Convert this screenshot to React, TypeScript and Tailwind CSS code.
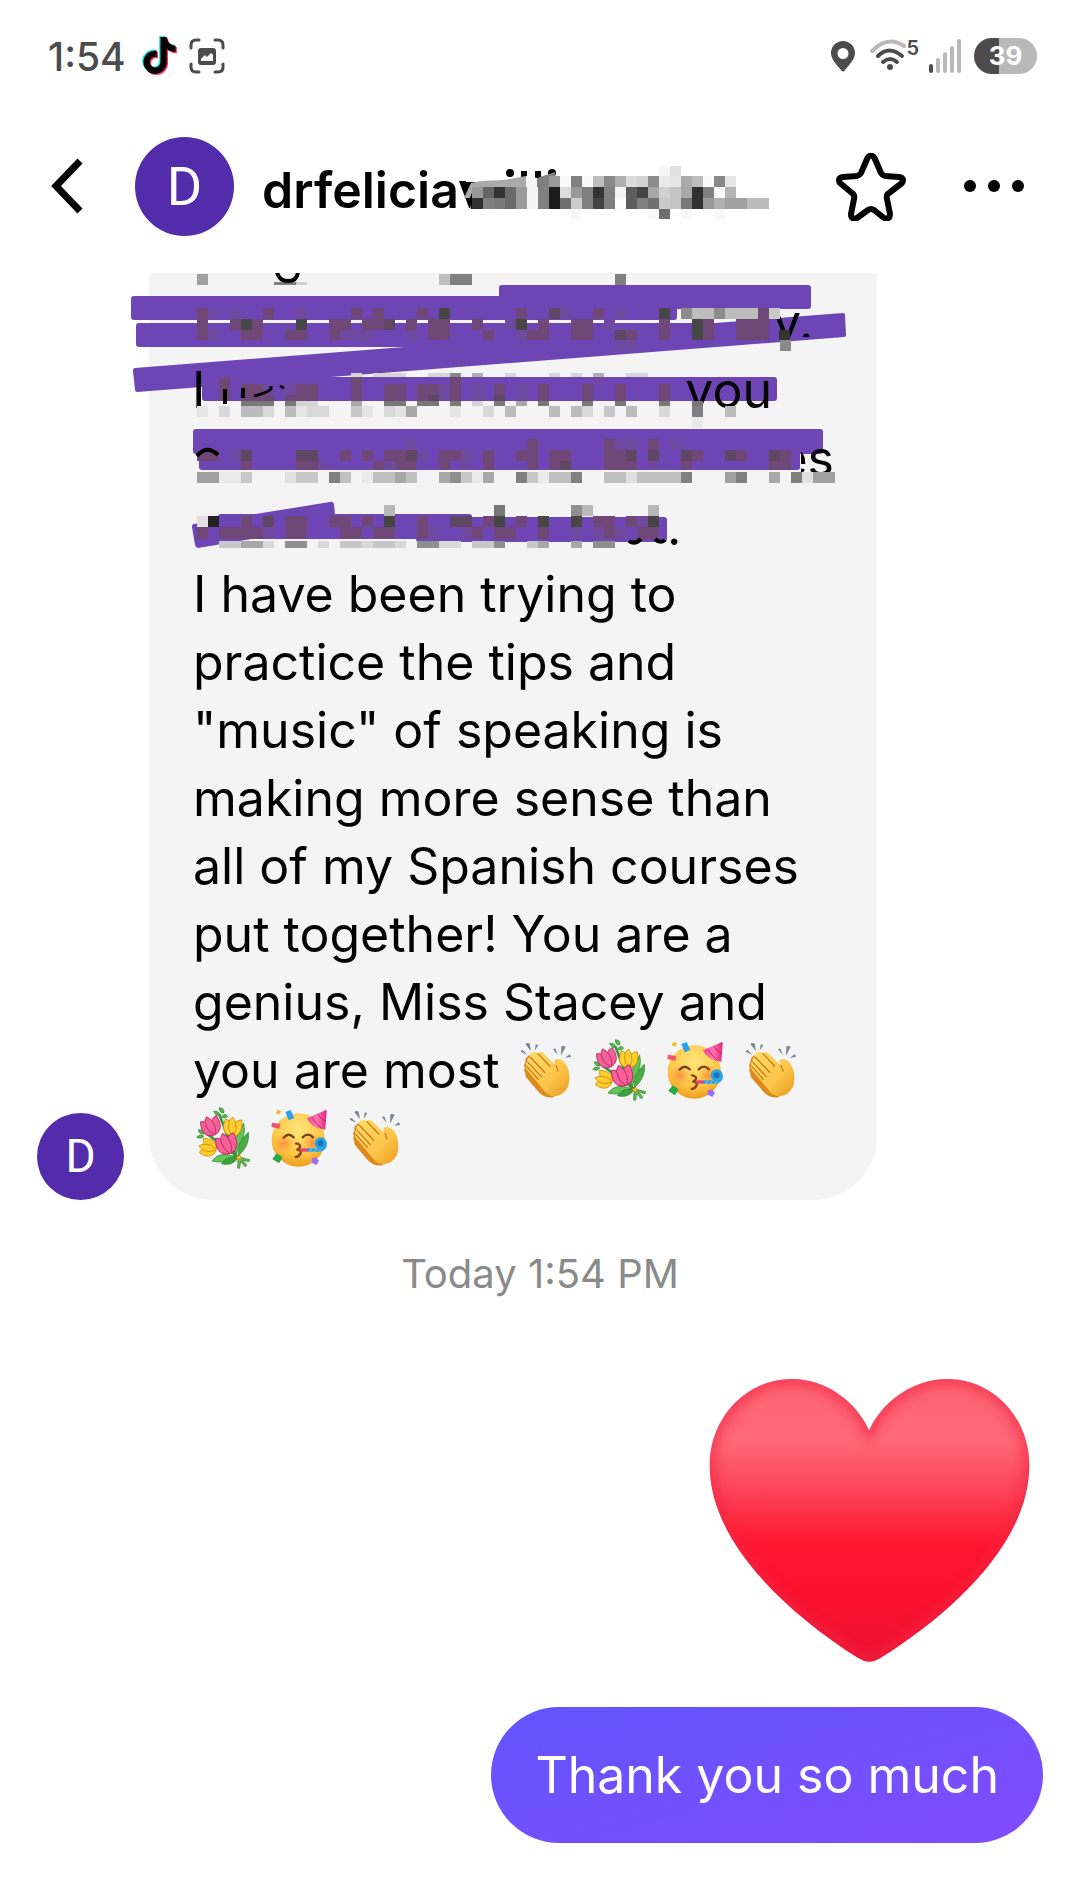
import type { ReactNode } from 'react';

type Row = { y: number; h: number; cells: Record<string, number[]> };

const CELL = 11;
const MAUVE = '#704878';
const DIM = '#6f48a0';
const DUSK = '#5f4763';
const DARK = '#474747';

const nameRows: Row[] = [
  { y: 10, h: 10, cells: { '#f6f6f6': [17], '#e0e0e0': [18] } },
  {
    y: 20,
    h: 11,
    cells: {
      '#999999': [7], '#fafafa': [8, 10, 21], '#808080': [9], '#bdbdbd': [11, 20], '#888888': [12, 22],
      '#b0b0b0': [13], '#dcdcdc': [14], '#d4d4d4': [15], '#8c8c8c': [16], '#eaeaea': [17], '#e5e5e5': [18, 23],
      '#aaaaaa': [19],
    },
  },
  {
    y: 31,
    h: 11,
    cells: {
      '#999999': [0, 9], '#666666': [1], '#333333': [2], '#6a6a6a': [3], '#9a9a9a': [4], '#f4f4f4': [5, 13],
      '#808080': [6, 10, 12, 21], '#1c1c1c': [7], '#dcdcdc': [8], '#343434': [11], '#5c5c5c': [14], '#444444': [15],
      '#a8a8a8': [16, 19], '#d0d0d0': [17], '#c4c4c4': [18], '#303030': [20], '#fafafa': [22], '#b4b4b4': [23],
    },
  },
  {
    y: 42,
    h: 11,
    cells: {
      '#303030': [0, 20], '#808080': [1, 6, 10, 12, 15], '#7a7a7a': [2], '#6a6a6a': [3], '#9a9a9a': [4],
      '#f4f4f4': [5], '#1c1c1c': [7], '#707070': [8, 16], '#cccccc': [9], '#444444': [11], '#fcfcfc': [13],
      '#5c5c5c': [14], '#c8c8c8': [17], '#c4c4c4': [18], '#777777': [19], '#999999': [21], '#b0b0b0': [22],
      '#a0a0a0': [23, 24], '#bcbcbc': [25, 26],
    },
  },
  { y: 53, h: 10, cells: { '#6e6e6e': [17], '#f8f8f8': [9, 16, 19, 22] } },
];

const messageRows: Row[] = [
  { y: 274, h: 11, cells: { '#a0a0a0': [0], '#c0c0c0': [22], '#808080': [23, 24, 38] } },
  { y: 282, h: 3, cells: { '#808080': [7, 8], '#d0d0d0': [9] } },
  {
    y: 308,
    h: 11,
    cells: {
      [MAUVE]: [0, 6, 14, 16, 20, 29, 36, 51], [DIM]: [1, 3, 9, 33, 38], [DARK]: [22, 42], [DUSK]: [32],
      '#8c8c8c': [44, 47], '#bcbcbc': [45, 46, 48, 49, 50], '#c8c8c8': [52],
    },
  },
  {
    y: 319,
    h: 11,
    cells: {
      [MAUVE]: [0, 3, 5, 12, 13, 15, 16, 19, 21, 22, 25, 31, 34, 35, 42, 46, 49, 50, 51],
      [DARK]: [4, 9, 29, 45], [DUSK]: [17], [DIM]: [28, 37],
    },
  },
  {
    y: 330,
    h: 10,
    cells: {
      [MAUVE]: [0, 4, 5, 8, 9, 12, 21, 22, 26, 30, 31, 34, 35, 39, 42, 46, 49, 50, 51],
      [DIM]: [1, 13, 14, 15, 19, 29], [DUSK]: [38], [DARK]: [45],
    },
  },
  { y: 340, h: 11, cells: { [DIM]: [38, 39], '#8a8a8a': [53] } },
  {
    y: 373,
    h: 4,
    cells: { '#d6d6d6': [14, 16, 17, 18, 21, 22, 28, 32, 34, 39, 40], '#888888': [23], '#b0b0b0': [25, 36] },
  },
  { y: 377, h: 7, cells: { [MAUVE]: [2, 14, 23], [DIM]: [36] } },
  {
    y: 384,
    h: 17,
    cells: {
      [MAUVE]: [2, 4, 5, 9, 10, 14, 17, 18, 20, 21, 23, 27, 31, 35, 38, 42], [DIM]: [6, 8, 22, 25, 29],
    },
  },
  { y: 395, h: 6, cells: { [MAUVE]: [6, 8], [DUSK]: [21, 27] } },
  {
    y: 401,
    h: 5,
    cells: {
      '#787878': [4, 5, 6, 8, 17, 18, 20, 21, 23, 27, 31, 35, 38, 42, 45], '#a8a8a8': [14, 29], '#d4d4d4': [9, 10, 25],
    },
  },
  {
    y: 406,
    h: 11,
    cells: {
      '#d8d8d8': [2, 6, 10, 11, 17, 26, 35, 42], '#bcbcbc': [4, 5, 8, 28, 32, 34, 39, 48], '#c8c8c8': [14, 37],
      '#a8a8a8': [19], '#e4e4e4': [0, 9, 15, 18, 23], '#808080': [45],
    },
  },
  { y: 417, h: 11, cells: { '#e8e8e8': [45] } },
  { y: 439, h: 11, cells: { [DIM]: [19, 38, 39, 43], [MAUVE]: [30, 37, 41] } },
  {
    y: 450,
    h: 11,
    cells: {
      [MAUVE]: [0, 1, 13, 15, 17, 18, 22, 23, 26, 29, 30, 32, 33, 37, 38, 45, 49, 53],
      [DUSK]: [4, 9, 10, 19, 39, 41, 44, 48, 52], [DIM]: [3, 20, 24],
    },
  },
  {
    y: 461,
    h: 9,
    cells: {
      [MAUVE]: [4, 9, 10, 16, 18, 19, 22, 26, 30, 32, 37, 38, 39, 44, 52, 53], [DIM]: [11, 17, 24, 41], [DUSK]: [33],
    },
  },
  {
    y: 472,
    h: 11,
    cells: {
      '#a0a0a0': [0, 1, 48, 56, 57], '#eaeaea': [2, 3, 15, 25, 31], '#c8c8c8': [4, 9, 10, 24, 30], '#e0e0e0': [8, 39, 55],
      '#808080': [12, 29, 34, 44, 49, 54], '#c0c0c0': [13, 16, 17, 19, 32, 33, 37, 38, 40, 41, 42, 43], '#a8a8a8': [18, 22, 26, 52],
      '#909090': [23],
    },
  },
  { y: 505, h: 11, cells: { '#b8b8b8': [17, 35, 41], '#787878': [27], '#909090': [34] } },
  {
    y: 516,
    h: 11,
    cells: {
      '#e0e0e0': [0], '#222222': [1], [MAUVE]: [4, 8, 9, 12, 13, 15, 20, 26, 29, 36, 37, 39], [DUSK]: [6, 23, 24],
      [DARK]: [17, 27, 31, 34, 41], [DIM]: [40],
    },
  },
  {
    y: 527,
    h: 12,
    cells: {
      [MAUVE]: [0, 2, 3, 4, 5, 8, 9, 13, 14, 16, 17, 20, 25, 27, 28, 31, 37, 40, 41], [DIM]: [6, 21, 24, 34, 36, 38],
    },
  },
  {
    y: 541,
    h: 7,
    cells: {
      '#c8c8c8': [2, 3, 13, 14, 16, 17, 25, 26, 30], '#a8a8a8': [4, 5, 31, 34], '#909090': [8, 9, 20, 21, 27, 36, 37],
      '#d8d8d8': [6, 11, 15, 18, 22, 23],
    },
  },
];

function Mosaic({ rows, x }: { rows: Row[]; x: number }) {
  return (
    <g shapeRendering="crispEdges">
      {rows.flatMap((row) =>
        Object.entries(row.cells).flatMap(([fill, columns]) =>
          columns.map((c) => (
            <rect key={`${row.y}-${fill}-${c}`} x={x + c * CELL} y={row.y} width={CELL} height={row.h} fill={fill} />
          )),
        ),
      )}
    </g>
  );
}

function Scribbles() {
  return (
    <svg className="absolute top-0 left-[-19px] h-[288px] w-[750px]" viewBox="130 273 750 288" aria-label="Crossed-out lines" role="img">
      <defs>
        <clipPath id="clip-es"><rect x="801" y="430" width="50" height="42" /></clipPath>
        <clipPath id="clip-you"><rect x="680" y="370" width="110" height="40" /></clipPath>
        <clipPath id="clip-y"><rect x="774" y="312" width="50" height="25" /></clipPath>
      </defs>
      <g fill="#6d45b5">
        <rect x="131" y="296" width="546" height="24" rx="3" />
        <rect x="499" y="285" width="312" height="24" rx="3" />
        <rect x="136" y="323" width="560" height="24" rx="3" />
        <path d="M135 368 843 313q2 0 2 2l1 20q0 2-2 2L137 392q-2 0-2-2l-2-19q0-3 2-3Z" />
        <rect x="202" y="377" width="575" height="24" rx="3" />
        <rect x="193" y="429" width="630" height="25" rx="3" />
        <rect x="199" y="440" width="601" height="30" rx="3" />
        <path d="M194 524 330 502q3-1 4 2l2 21-138 23q-2 0-3-3l-3-18q0-3 2-3Z" />
        <rect x="218" y="514" width="254" height="25" rx="3" />
        <rect x="416" y="517" width="251" height="25" rx="3" />
      </g>
      <g fontSize="50" fill="#000">
        <text x="192" y="408">I</text>
        <text x="772" y="408" textAnchor="end" clipPath="url(#clip-you)">you</text>
        <text x="834" y="476" textAnchor="end" clipPath="url(#clip-es)">es</text>
        <text x="773" y="340" clipPath="url(#clip-y)">y.</text>
        <text x="667" y="545">.</text>
      </g>
      <Mosaic rows={messageRows} x={197} />
      <rect x="779" y="330" width="11" height="10" fill="#333" />
      <g fill="none" stroke="#000" strokeWidth="4">
        <path d="M277 272Q279 281 288 281Q297 281 298 272" />
        <path d="M197 456Q207 444 218 455" />
        <path d="M225 389V404M243 388V398" />
        <path d="M254 396Q267 393 271 389V386M280 386l4 2" strokeWidth="3" />
        <path d="M629 541Q635 545 641 539M655 539Q660 544 665 540" />
      </g>
    </svg>
  );
}

function Emoji({ label, viewBox, children }: { label: string; viewBox: string; children: ReactNode }) {
  return (
    <svg role="img" aria-label={label} viewBox={viewBox} className="inline-block h-[62px] w-[61px] align-[-13px]">
      {children}
    </svg>
  );
}

function Clap() {
  return (
    <Emoji label="Clapping hands" viewBox="42 28 183 186">
      <defs>
        <linearGradient id="skin" x1="0" y1="0" x2="1" y2="1">
          <stop offset="0" stopColor="#ffdc6b" />
          <stop offset="0.6" stopColor="#fcc549" />
          <stop offset="1" stopColor="#e79a1e" />
        </linearGradient>
      </defs>
      <g fill="#7d8791">
        <path d="M62 66Q64 60 68 61L82 75Z" />
        <path d="M76 43Q82 38 89 42L93 65Z" />
        <path d="M107 45Q112 44 115 47L104 63Z" />
        <path d="M159 59Q163 55 167 58L173 76Z" />
        <path d="M184 50Q191 47 197 51L183 78Z" />
        <path d="M209 74Q213 78 213 82L195 84Z" />
      </g>
      <path d="M76 99Q69 106 75 115Q70 121 76 131Q74 139 82 147L118 189Q138 207 160 203L174 188 100 80Q90 72 84 80Q74 86 76 99Z" fill="#dc8a1c" />
      <path d="M94 70Q86 74 90 83Q80 84 83 96Q75 99 80 108Q75 114 83 123L126 175Q142 199 162 200Q190 198 204 171Q211 149 206 124Q200 100 184 91Q172 84 163 92Q161 98 168 108L129 70Q119 62 114 71Q103 62 94 70Z" fill="url(#skin)" />
      <path d="M91 83 134 128M84 98 124 141M81 111 115 149M114 72 149 109M168 107 174 124" fill="none" stroke="#cd7a19" strokeWidth="4" strokeLinecap="round" />
    </Emoji>
  );
}

function Tulip({ x, y, fill, edge, r, s }: { x: number; y: number; fill: string; edge: string; r: number; s: number }) {
  return (
    <g transform={`translate(${x} ${y}) rotate(${r}) scale(${s})`} stroke={edge} strokeWidth="2.5" strokeLinejoin="round">
      <path d="M-25 -22Q-33 6 -20 20Q-7 31 7 28Q26 22 29 3Q31 -12 26 -26Q14 -24 8 -16Q3 -26 -3 -31Q-10 -24 -12 -17Q-18 -23 -25 -22Z" fill={fill} />
      <path d="M-12 -17Q-15 9 2 26M8 -16Q17 5 7 26" fill="none" />
    </g>
  );
}

function Bouquet() {
  return (
    <Emoji label="Bouquet" viewBox="273 28 183 186">
      <g stroke="#258132" strokeWidth="2">
        <g fill="#55b948">
          <path d="M352 30Q369 31 365 46Q352 47 352 30Z" />
          <path d="M335 41Q349 39 354 51Q343 59 335 41Z" />
          <path d="M359 57Q370 44 377 56Q370 66 359 57Z" />
          <path d="M289 96Q302 95 306 109Q291 111 289 96Z" />
          <path d="M284 119Q293 108 305 115Q299 126 284 119Z" />
        </g>
        <path d="M352 50 400 178M310 105 408 178M370 75 400 170" fill="none" stroke="#39983c" strokeWidth="8" />
        <path d="M425 76Q434 112 409 145L403 174Q388 137 407 110Z" fill="#62c352" />
        <path d="M439 104Q445 142 410 174Q402 137 439 104Z" fill="#49ad42" />
        <path d="M330 190Q354 157 402 178Q363 200 330 190Z" fill="#65c355" />
        <path d="M358 198Q376 171 408 182Q389 207 358 198Z" fill="#3da23e" />
        <path d="M405 173 415 179 443 186 441 192 422 188 435 203 429 207 416 191 413 212 407 211 408 184Z" fill="#64b94d" />
      </g>
      <Tulip x={326} y={86} fill="#f4609a" edge="#be2863" r={-18} s={1} />
      <Tulip x={391} y={88} fill="#ffcf32" edge="#c98700" r={7} s={0.95} />
      <Tulip x={318} y={151} fill="#ffcc2e" edge="#c98700" r={-70} s={0.88} />
      <Tulip x={373} y={139} fill="#f9609a" edge="#bd2460" r={-14} s={1.08} />
      <path d="m402 178 12-5 5 9-10 5Z" fill="#f5be31" stroke="#b87b0b" strokeWidth="2" />
    </Emoji>
  );
}

function Party() {
  return (
    <Emoji label="Partying face" viewBox="495 28 183 186">
      <defs>
        <radialGradient id="face" cx="0.5" cy="0.3" r="0.72">
          <stop offset="0" stopColor="#ffe47a" />
          <stop offset="0.65" stopColor="#fdc746" />
          <stop offset="1" stopColor="#ef981d" />
        </radialGradient>
        <radialGradient id="cheek">
          <stop offset="0" stopColor="#ff7d35" stopOpacity="0.75" />
          <stop offset="1" stopColor="#ff8a3d" stopOpacity="0" />
        </radialGradient>
        <linearGradient id="hat">
          <stop offset="0" stopColor="#f3408e" />
          <stop offset="0.5" stopColor="#ff75b0" />
          <stop offset="1" stopColor="#dc277a" />
        </linearGradient>
      </defs>
      <circle cx="586" cy="127" r="80" fill="url(#face)" />
      <circle cx="542" cy="137" r="31" fill="url(#cheek)" />
      <circle cx="628" cy="137" r="31" fill="url(#cheek)" />
      <path d="M542 120Q556 103 572 119M599 119Q615 103 630 119" fill="none" stroke="#75431b" strokeWidth="7" strokeLinecap="round" />
      <path d="M579 137Q596 140 590 150L583 156Q597 159 593 166Q589 177 578 178" fill="none" stroke="#884619" strokeWidth="7" strokeLinecap="round" strokeLinejoin="round" />
      <path d="M592 157H615" stroke="#ee3c78" strokeWidth="10" />
      <path d="M613 157H650Q667 154 666 137" fill="none" stroke="#2c9fe3" strokeWidth="11" />
      <path d="M620 162l7-10M634 162l7-10M648 161l8-10" stroke="#83d2fb" strokeWidth="3" />
      <circle cx="653" cy="137" r="18" fill="#28a3e7" />
      <circle cx="653" cy="137" r="9" fill="#1575b5" />
      <path d="M669 37Q672 37 671 41L667 96Q646 94 631 84Q618 76 612 62Z" fill="url(#hat)" />
      <path d="M626 58Q637 76 656 93M644 49Q653 64 669 72" fill="none" stroke="#cf1d70" strokeWidth="3" />
      <path d="m523 36 11 4-5 11-11-4Z" fill="#f8bd2d" />
      <path d="m547 43 16-6 11 24-17 7Z" fill="#2ba1eb" />
      <path d="m507 75 25 4-3 14-24-5Z" fill="#f6526b" />
      <path d="m521 167 18 12-11 18-20-13Z" fill="#28a944" />
      <path d="m638 179 10 10-8 13-14-7 1-13Z" fill="#9b6cf2" />
    </Emoji>
  );
}

const NOTE =
  'M448 209.9a210 210 0 0 1-122.8-39.2v178.7A162.6 162.6 0 1 1 185 188.3v89.9a74.6 74.6 0 1 0 52.2 71.2V0h88a121 121 0 0 0 1.9 22.2A122 122 0 0 0 381 102.4a121 121 0 0 0 67 20.1Z';

function StatusBar() {
  return (
    <div className="flex h-28 items-center justify-between pr-[43px] pl-12 text-[#4c4c4c]">
      <div className="flex items-center gap-4">
        <span className="text-[39px] leading-none font-medium">1:54</span>
        <svg className="h-10 w-[35px]" viewBox="-20 -14 488 558" aria-hidden="true">
          <path d={NOTE} fill="#25e5e5" transform="translate(-18 -14)" />
          <path d={NOTE} fill="#f5335c" transform="translate(18 18)" />
          <path d={NOTE} fill="#000" />
        </svg>
        <svg className="h-9 w-9 -ml-1" viewBox="0 0 36 36" fill="none" stroke="currentColor" strokeWidth="3" strokeLinecap="round" aria-hidden="true">
          <path d="M2 10V7q0-5 5-5h3M26 2h3q5 0 5 5v3M34 26v3q0 5-5 5h-3M10 34H7q-5 0-5-5v-3" />
          <rect x="9" y="10" width="18" height="17" rx="3" fill="currentColor" stroke="none" />
          <path d="M12 23v-2l4-4 2 2 4-4 2 2v6Z" fill="#fff" stroke="none" />
        </svg>
      </div>
      <div className="flex items-center">
        <svg className="mr-[15px] h-[31px] w-6" viewBox="0 0 24 31" fill="currentColor" aria-hidden="true">
          <path fillRule="evenodd" d="M12 0a12 12 0 0 1 12 12c0 6-5 11-10 17q-2 3-4 0C5 23 0 18 0 12A12 12 0 0 1 12 0Zm0 7a5.5 5.5 0 1 0 0 11 5.5 5.5 0 0 0 0-11Z" />
        </svg>
        <svg className="h-9 w-9" viewBox="0 0 36 36" fill="none" strokeWidth="4" strokeLinecap="round" aria-hidden="true">
          <path d="M2 13Q18-3 34 8" stroke="#b9b9b9" />
          <path d="M8 18Q19 7 32 18M13 24Q20 18 27 24" stroke="currentColor" />
          <circle cx="20" cy="29" r="3" fill="currentColor" />
        </svg>
        <span className="mr-2.5 self-start text-xl leading-none font-semibold">5</span>
        <svg className="mr-[13px] h-[34px] w-8" viewBox="0 0 32 34" strokeWidth="4" strokeLinecap="round" aria-hidden="true">
          <path d="M2 27v5" stroke="#4c4c4c" />
          <path d="M9 21v11M16 15v17M23 9v23M30 2v30" stroke="#b9b9b9" />
        </svg>
        <span className="flex h-9 w-[63px] items-center justify-center rounded-full bg-linear-to-r from-[#4c4c4c] from-40% to-[#b9b9b9] to-40% text-[26px] leading-none font-bold text-white">
          39
        </span>
      </div>
    </div>
  );
}

function Header() {
  return (
    <header className="flex h-[161px] items-start pr-14 pl-[50px]">
      <button type="button" aria-label="Back" className="mt-[45px] mr-[51px] h-[58px] w-[34px]">
        <svg viewBox="0 0 34 58" fill="none" stroke="#000" strokeWidth="7">
          <path d="M30 4 6 29l24 25" />
        </svg>
      </button>
      <div className="mt-[25px] flex h-[99px] w-[99px] shrink-0 items-center justify-center rounded-full bg-[#522cab] font-[Roboto] text-[54px] text-white">
        D
      </div>
      <h1 className="relative mt-11 ml-7 flex-1 text-[50px] leading-[68px] font-semibold">
        drfeliciav
        <svg className="absolute top-0 left-[199px] h-[68px] w-[320px]" viewBox="0 0 320 68" aria-label="Hidden part of the name" role="img">
          <rect x="9" y="20" width="20" height="35" fill="#fff" />
          <g fill="#000">
            <circle cx="49" cy="17" r="4" />
            <path d="M60 15h6v8h-6ZM74 15h6v8h-6Z" />
            <circle cx="91" cy="17" r="4" />
            <path d="M4 26h20l-12 27H10Z" />
          </g>
          <path d="M3 42 10 27 20 25 42 24 65 20V31H13L9 42Z" fill="#aaa" />
          <path d="M65 20 76 22V42H65Z" fill="#f4f4f4" />
          <path d="M76 22 94 16V42H76Z" fill="#808080" />
          <Mosaic rows={nameRows} x={11} />
        </svg>
      </h1>
      <button type="button" aria-label="Favourite" className="mt-10 h-[70px] w-[70px]">
        <svg viewBox="0 0 70 68" fill="none" stroke="#000" strokeWidth="6" strokeLinejoin="round">
          <path d="M31.500 5q3.500-5 7 0L45 20q1 2 4 3l14 1q6 1 3 6L53 40q-3 2-2 6l3 15q0 6-6 4L38 57q-3-2-6 0L21 65q-6 2-6-4l3-15q1-4-2-6L4 30q-3-5 3-6l14-1q3-1 4-3Z" />
        </svg>
      </button>
      <button type="button" aria-label="More" className="mt-[68px] ml-[58px] h-3 w-[60px]">
        <svg viewBox="0 0 60 12" fill="#000">
          <circle cx="6" cy="6" r="6" />
          <circle cx="30" cy="6" r="6" />
          <circle cx="54" cy="6" r="6" />
        </svg>
      </button>
    </header>
  );
}

const HEART =
  'M568 215C530 130 440 60 335 60C200 60 88 175 88 320C88 540 300 750 535 900Q568 922 602 900C840 750 1050 540 1050 320C1050 175 940 60 803 60C700 60 605 130 568 215Z';

function Heart() {
  return (
    <svg role="img" aria-label="Red heart" className="mr-[13px] h-[285px] w-[321px]" viewBox="86 58 966 856">
      <defs>
        <linearGradient id="heart" x1="0" y1="0" x2="0" y2="1">
          <stop offset="0" stopColor="#fe6473" />
          <stop offset="0.22" stopColor="#ff6877" />
          <stop offset="0.4" stopColor="#fd4257" />
          <stop offset="0.58" stopColor="#ff1730" />
          <stop offset="0.75" stopColor="#fb122d" />
          <stop offset="1" stopColor="#ec1132" />
        </linearGradient>
        <clipPath id="heart-clip"><path d={HEART} /></clipPath>
        <filter id="soft" x="-10%" y="-10%" width="120%" height="120%"><feGaussianBlur stdDeviation="18" /></filter>
      </defs>
      <path d={HEART} fill="url(#heart)" />
      <g clipPath="url(#heart-clip)">
        <path d={HEART} fill="none" stroke="#f02844" strokeWidth="34" opacity="0.7" filter="url(#soft)" />
      </g>
    </svg>
  );
}

export default function App() {
  return (
    <div className="min-h-screen bg-white font-[Inter,sans-serif] text-black">
      <StatusBar />
      <Header />
      <main>
        <div className="flex items-end gap-[25px] pl-[37px]">
          <div className="flex h-[87px] w-[87px] shrink-0 items-center justify-center rounded-full bg-[#522cab] font-[Roboto] text-[46px] text-white">
            D
          </div>
          <div className="max-w-[728px] rounded-b-[64px] bg-[#f4f4f4] px-11 pb-7">
            <div className="relative -mx-11 h-[287px]">
              <Scribbles />
            </div>
            <p className="text-[50px] leading-[68px]">
              I have been trying to practice the tips and "music" of speaking is making more sense than all of my Spanish
              courses put together! You are a genius, Miss Stacey and you are most <Clap /> <Bouquet /> <Party /> <Clap />{' '}
              <Bouquet /> <Party /> <Clap />
            </p>
          </div>
        </div>
        <p className="mt-12 text-center text-[40px] leading-[52px] text-[#8a8a8a]">Today 1:54 PM</p>
        <div className="mt-[78px] flex flex-col items-end gap-11 pr-[37px]">
          <Heart />
          <p className="rounded-[68px] bg-linear-165 from-[#5f55ff] to-[#824bff] px-11 py-[34px] text-[50px] leading-[68px] text-white">
            Thank you so much
          </p>
        </div>
      </main>
    </div>
  );
}
